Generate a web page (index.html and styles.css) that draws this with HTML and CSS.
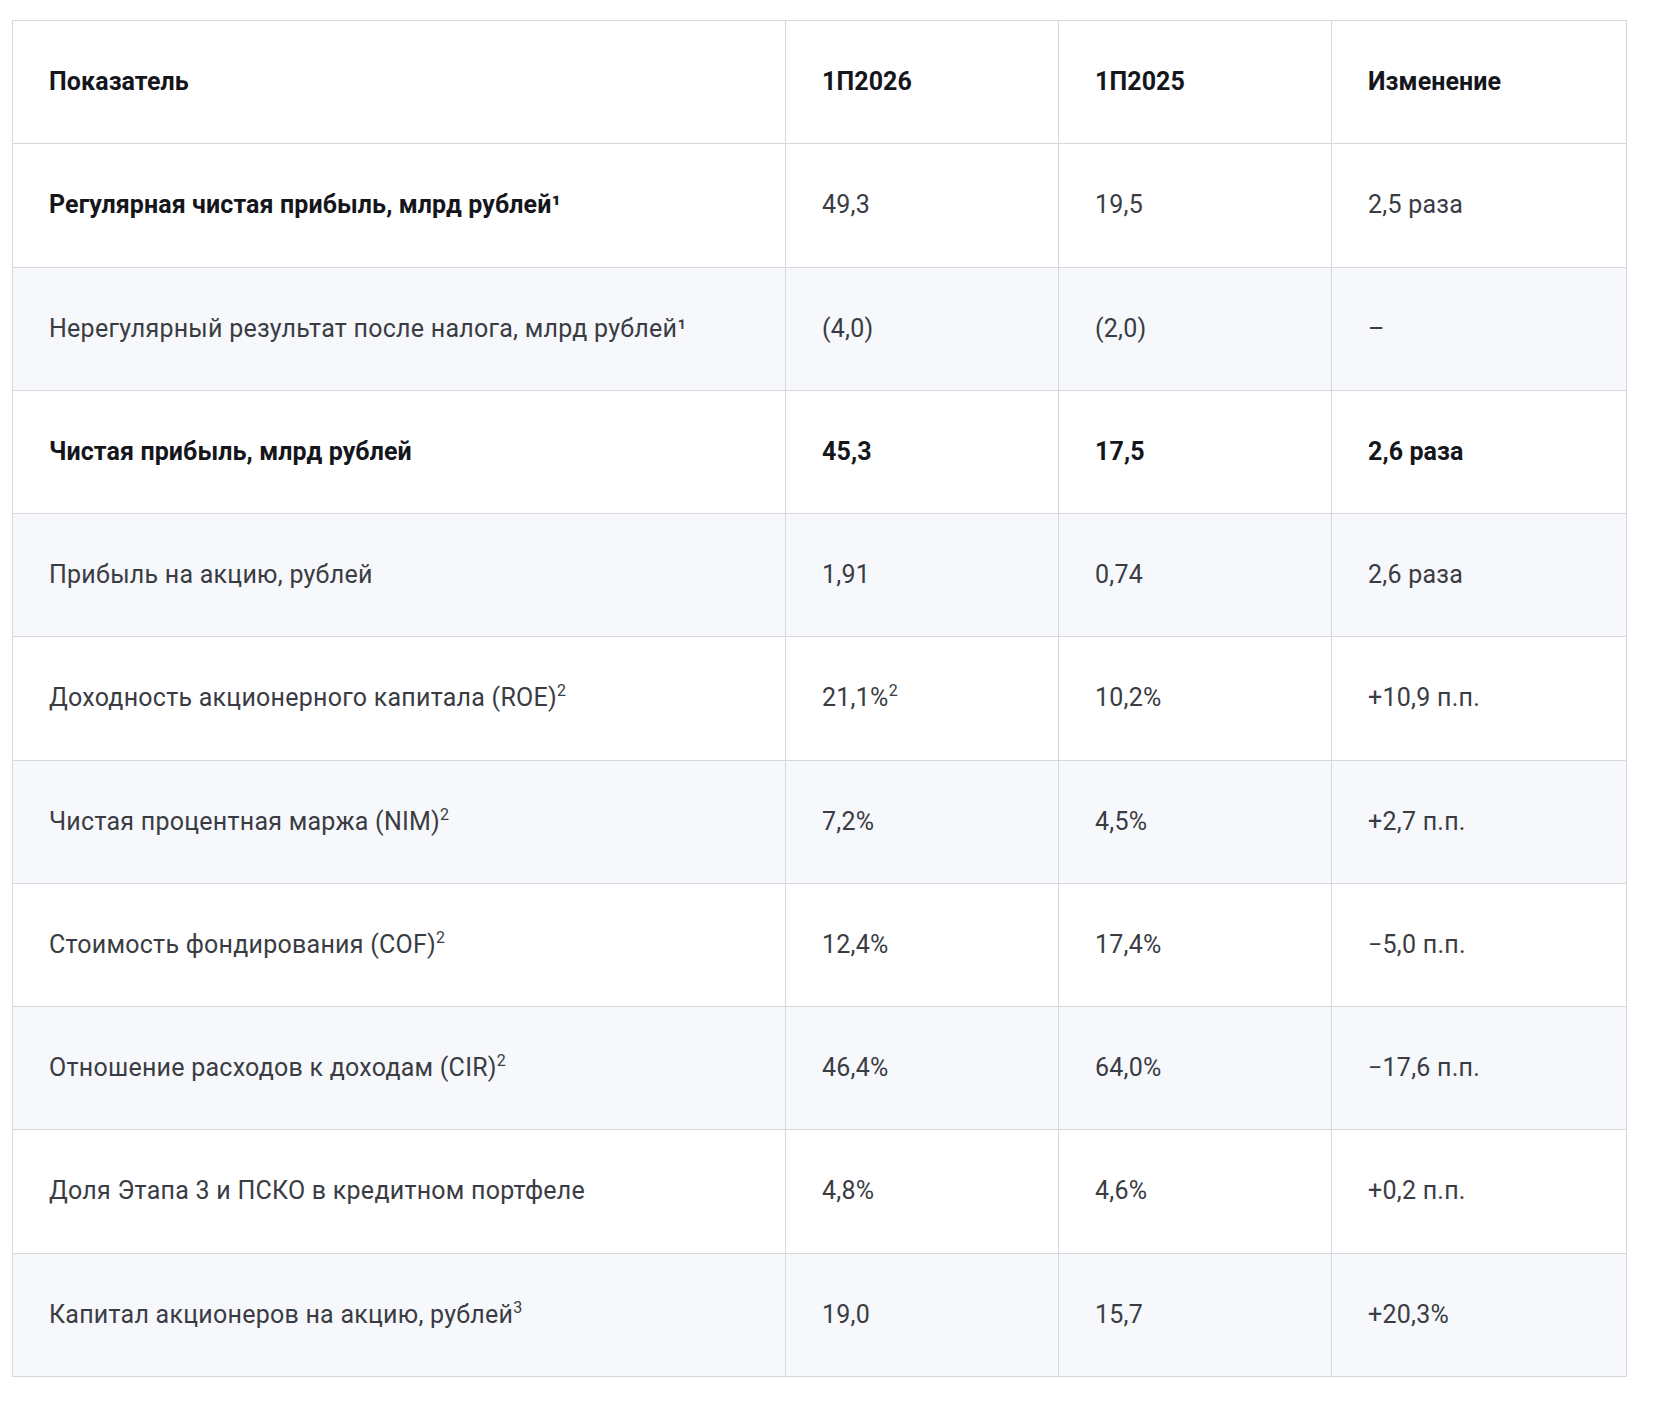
FILE: index.html
```html
<!DOCTYPE html>
<html lang="ru">
<head>
<meta charset="utf-8">
<title>Результаты</title>
<link rel="stylesheet" href="styles.css">
</head>
<body>
<div class="wrap">
<table class="results">
<colgroup>
<col class="c1"><col class="c2"><col class="c3"><col class="c4">
</colgroup>
<thead>
<tr><th>Показатель</th><th>1П2026</th><th>1П2025</th><th>Изменение</th></tr>
</thead>
<tbody>
<tr class="bold-label"><td>Регулярная чистая прибыль, млрд рублей¹</td><td>49,3</td><td>19,5</td><td>2,5 раза</td></tr>
<tr class="alt"><td>Нерегулярный результат после налога, млрд рублей¹</td><td>(4,0)</td><td>(2,0)</td><td>–</td></tr>
<tr class="bold-row"><td>Чистая прибыль, млрд рублей</td><td>45,3</td><td>17,5</td><td>2,6 раза</td></tr>
<tr class="alt"><td>Прибыль на акцию, рублей</td><td>1,91</td><td>0,74</td><td>2,6 раза</td></tr>
<tr><td>Доходность акционерного капитала (ROE)<sup>2</sup></td><td>21,1%<sup>2</sup></td><td>10,2%</td><td>+10,9 п.п.</td></tr>
<tr class="alt"><td>Чистая процентная маржа (NIM)<sup>2</sup></td><td>7,2%</td><td>4,5%</td><td>+2,7 п.п.</td></tr>
<tr><td>Стоимость фондирования (COF)<sup>2</sup></td><td>12,4%</td><td>17,4%</td><td>−5,0 п.п.</td></tr>
<tr class="alt"><td>Отношение расходов к доходам (CIR)<sup>2</sup></td><td>46,4%</td><td>64,0%</td><td>−17,6 п.п.</td></tr>
<tr><td>Доля Этапа 3 и ПСКО в кредитном портфеле</td><td>4,8%</td><td>4,6%</td><td>+0,2 п.п.</td></tr>
<tr class="alt"><td>Капитал акционеров на акцию, рублей<sup>3</sup></td><td>19,0</td><td>15,7</td><td>+20,3%</td></tr>
</tbody>
</table>
</div>
</body>
</html>
```
FILE: styles.css
```css
html, body {
  margin: 0;
  padding: 0;
  background: #ffffff;
}
body {
  font-family: Roboto, "Noto Sans", "Liberation Sans", sans-serif;
  font-size: 25px;
  color: #3a3c44;
}
.wrap {
  padding: 20px 32px 20px 12px;
}
.results {
  border-collapse: collapse;
  width: 1614px;
  table-layout: fixed;
}
.c1 { width: 773px; }
.c2 { width: 273px; }
.c3 { width: 273px; }
.c4 { width: 295px; }
.results th,
.results td {
  border: 1px solid #d6d8dd;
  height: 123.25px;
  padding: 0 36px;
  text-align: left;
  vertical-align: middle;
  line-height: 30px;
  box-sizing: border-box;
  letter-spacing: 0.25px;
}
.results th {
  font-weight: 700;
  color: #14161b;
  letter-spacing: 0.1px;
}
.results tr.alt td {
  background: #f7f8fb;
}
.results tr.bold-label td:first-child,
.results tr.bold-row td {
  font-weight: 700;
  color: #14161b;
  letter-spacing: 0.1px;
}
.results sup {
  font-size: 16px;
  line-height: 0;
  vertical-align: 10px;
  letter-spacing: 0;
}
```
